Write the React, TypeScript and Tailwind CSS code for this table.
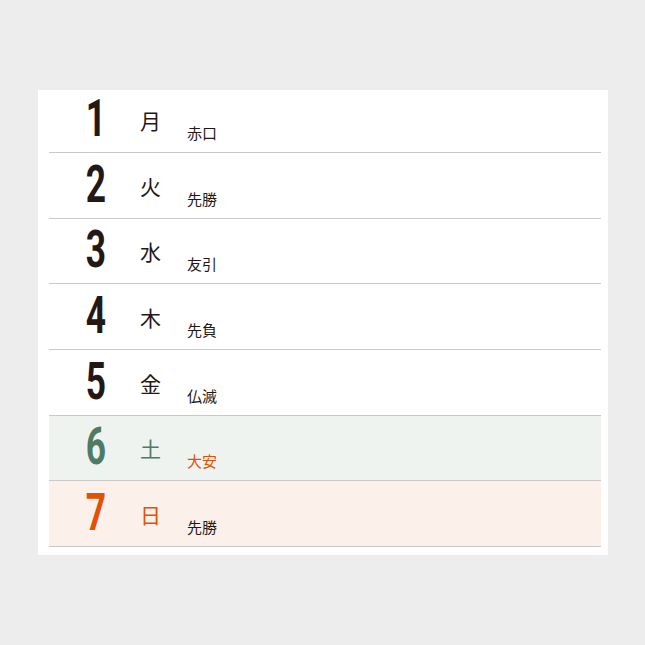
const days = [
  { n: '1', w: '月', r: '赤口', kind: 'normal' },
  { n: '2', w: '火', r: '先勝', kind: 'normal' },
  { n: '3', w: '水', r: '友引', kind: 'normal' },
  { n: '4', w: '木', r: '先負', kind: 'normal' },
  { n: '5', w: '金', r: '仏滅', kind: 'normal' },
  { n: '6', w: '土', r: '大安', kind: 'sat' },
  { n: '7', w: '日', r: '先勝', kind: 'sun' },
];

export default function App() {
  return (
    <div className="w-[645px] h-[645px] bg-[#ededed] pt-[90px] pl-[38px]">
      <div className="w-[570px] h-[465px] bg-white pl-[11px] pr-[7px]">
        {days.map((d, i) => {
          const numColor = d.kind === 'sat' ? 'text-[#4f7a64]' : d.kind === 'sun' ? 'text-[#e05206]' : 'text-[#231815]';
          const rokuColor = d.kind === 'sat' ? 'text-[#e05206]' : 'text-[#231815]';
          const bg = d.kind === 'sat' ? 'bg-[#eff3f0]' : d.kind === 'sun' ? 'bg-[#fcf0eb]' : 'bg-white';
          return (
            <div
              key={d.n}
              className={`flex items-end border-b border-[#c9c9c9] ${bg} ${i === 0 ? 'h-[63px]' : 'h-[65.67px]'}`}
            >
              <div className="w-[60px] ml-[17px] mb-[7px] flex justify-center">
                <span
                  className={`inline-block scale-x-[0.68] text-[52px] leading-none font-bold ${numColor}`}
                  style={{ fontFamily: 'Roboto, sans-serif' }}
                >
                  {d.n}
                </span>
              </div>
              <div
                className={`ml-[14px] w-[22px] mb-[21px] text-[21px] leading-none ${numColor}`}
                style={{ fontFamily: '"Noto Sans CJK JP", sans-serif' }}
              >
                {d.w}
              </div>
              <div
                className={`ml-[25px] mb-[12px] text-[15px] leading-none ${rokuColor}`}
                style={{ fontFamily: '"Noto Sans CJK JP", sans-serif' }}
              >
                {d.r}
              </div>
            </div>
          );
        })}
      </div>
    </div>
  );
}
